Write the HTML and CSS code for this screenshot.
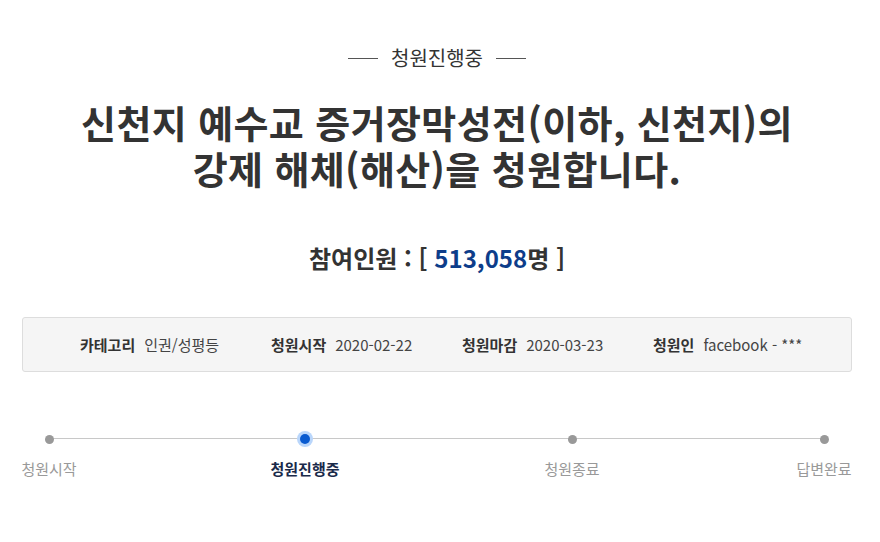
FILE: index.html
```html
<!DOCTYPE html>
<html lang="ko">
<head>
<meta charset="utf-8">
<title>청원진행중</title>
<link rel="stylesheet" href="styles.css">
</head>
<body>
<div class="page">
  <div class="status"><span class="status-line"></span><span class="status-text">청원진행중</span><span class="status-line"></span></div>
  <h1 class="title"><span class="title-line">신천지 예수교 증거장막성전(이하, 신천지)의</span><span class="title-line">강제 해체(해산)을 청원합니다.</span></h1>
  <div class="count">참여인원 : [ <span class="count-num">513,058</span>명 ]</div>
  <ul class="info">
    <li><strong>카테고리</strong><span>인권/성평등</span></li>
    <li><strong>청원시작</strong><span>2020-02-22</span></li>
    <li><strong>청원마감</strong><span>2020-03-23</span></li>
    <li><strong>청원인</strong><span>facebook - ***</span></li>
  </ul>
  <div class="progress">
    <div class="track"></div>
    <div class="step step-1"><span class="dot"></span><span class="label">청원시작</span></div>
    <div class="step step-2 active"><span class="dot"></span><span class="label">청원진행중</span></div>
    <div class="step step-3"><span class="dot"></span><span class="label">청원종료</span></div>
    <div class="step step-4"><span class="dot"></span><span class="label">답변완료</span></div>
  </div>
</div>
</body>
</html>
```

FILE: styles.css
```css
* { box-sizing: border-box; }
html, body { margin: 0; padding: 0; background: #fff; }
body {
  font-family: "Noto Sans CJK KR", "Noto Sans", sans-serif;
  color: #333;
}
.page {
  width: 880px;
  padding: 46px 28px 0 22px;
}
.status {
  display: flex;
  justify-content: center;
  align-items: center;
  gap: 13px;
  height: 24px;
  font-size: 20px;
  line-height: 24px;
  color: #333;
}
.status-line {
  display: block;
  width: 30px;
  height: 1px;
  background: #555;
}
.title {
  margin: 29px 0 0;
  text-align: center;
  font-size: 38px;
  font-weight: 700;
  color: #333;
  letter-spacing: 0.4px;
}
.title-line {
  display: block;
  height: 46px;
  line-height: 46px;
}
.count {
  margin-top: 51px;
  text-align: center;
  font-size: 24px;
  line-height: 32px;
  font-weight: 700;
  color: #333;
}
.count-num { color: #0d3d8a; }
.info {
  list-style: none;
  margin: 43px 0 0;
  padding: 0 0 0 57px;
  display: grid;
  grid-template-columns: 191px 191px 191px auto;
  height: 55px;
  line-height: 53px;
  background: #f5f5f5;
  border: 1px solid #ddd;
  border-radius: 3px;
  font-size: 15px;
  color: #333;
}
.info li { white-space: nowrap; }
.info strong { font-weight: 700; margin-right: 9px; }
.info span { color: #444; }
.progress {
  position: relative;
  margin-top: 60px;
  display: flex;
  justify-content: space-between;
}
.track {
  position: absolute;
  left: 27px;
  right: 28px;
  top: 6px;
  height: 1px;
  background: #c8c8c8;
}
.step {
  position: relative;
  display: flex;
  flex-direction: column;
  align-items: center;
}
.step-1 { width: 54px; }
.step-2 { width: 86px; }
.step-3 { width: 76px; }
.step-4 { width: 56px; }
.dot {
  display: block;
  width: 9px;
  height: 9px;
  margin: 2.5px 0;
  border-radius: 50%;
  background: #999;
}
.step.active .dot {
  width: 10px;
  height: 10px;
  margin: 2px 0;
  background: #0a5bd0;
  box-shadow: 0 0 0 3px #b9d6fb;
}
.label {
  margin-top: 13px;
  font-size: 15px;
  line-height: 20px;
  color: #999;
  white-space: nowrap;
}
.step.active .label {
  color: #1a2a4a;
  font-weight: 700;
}
```
